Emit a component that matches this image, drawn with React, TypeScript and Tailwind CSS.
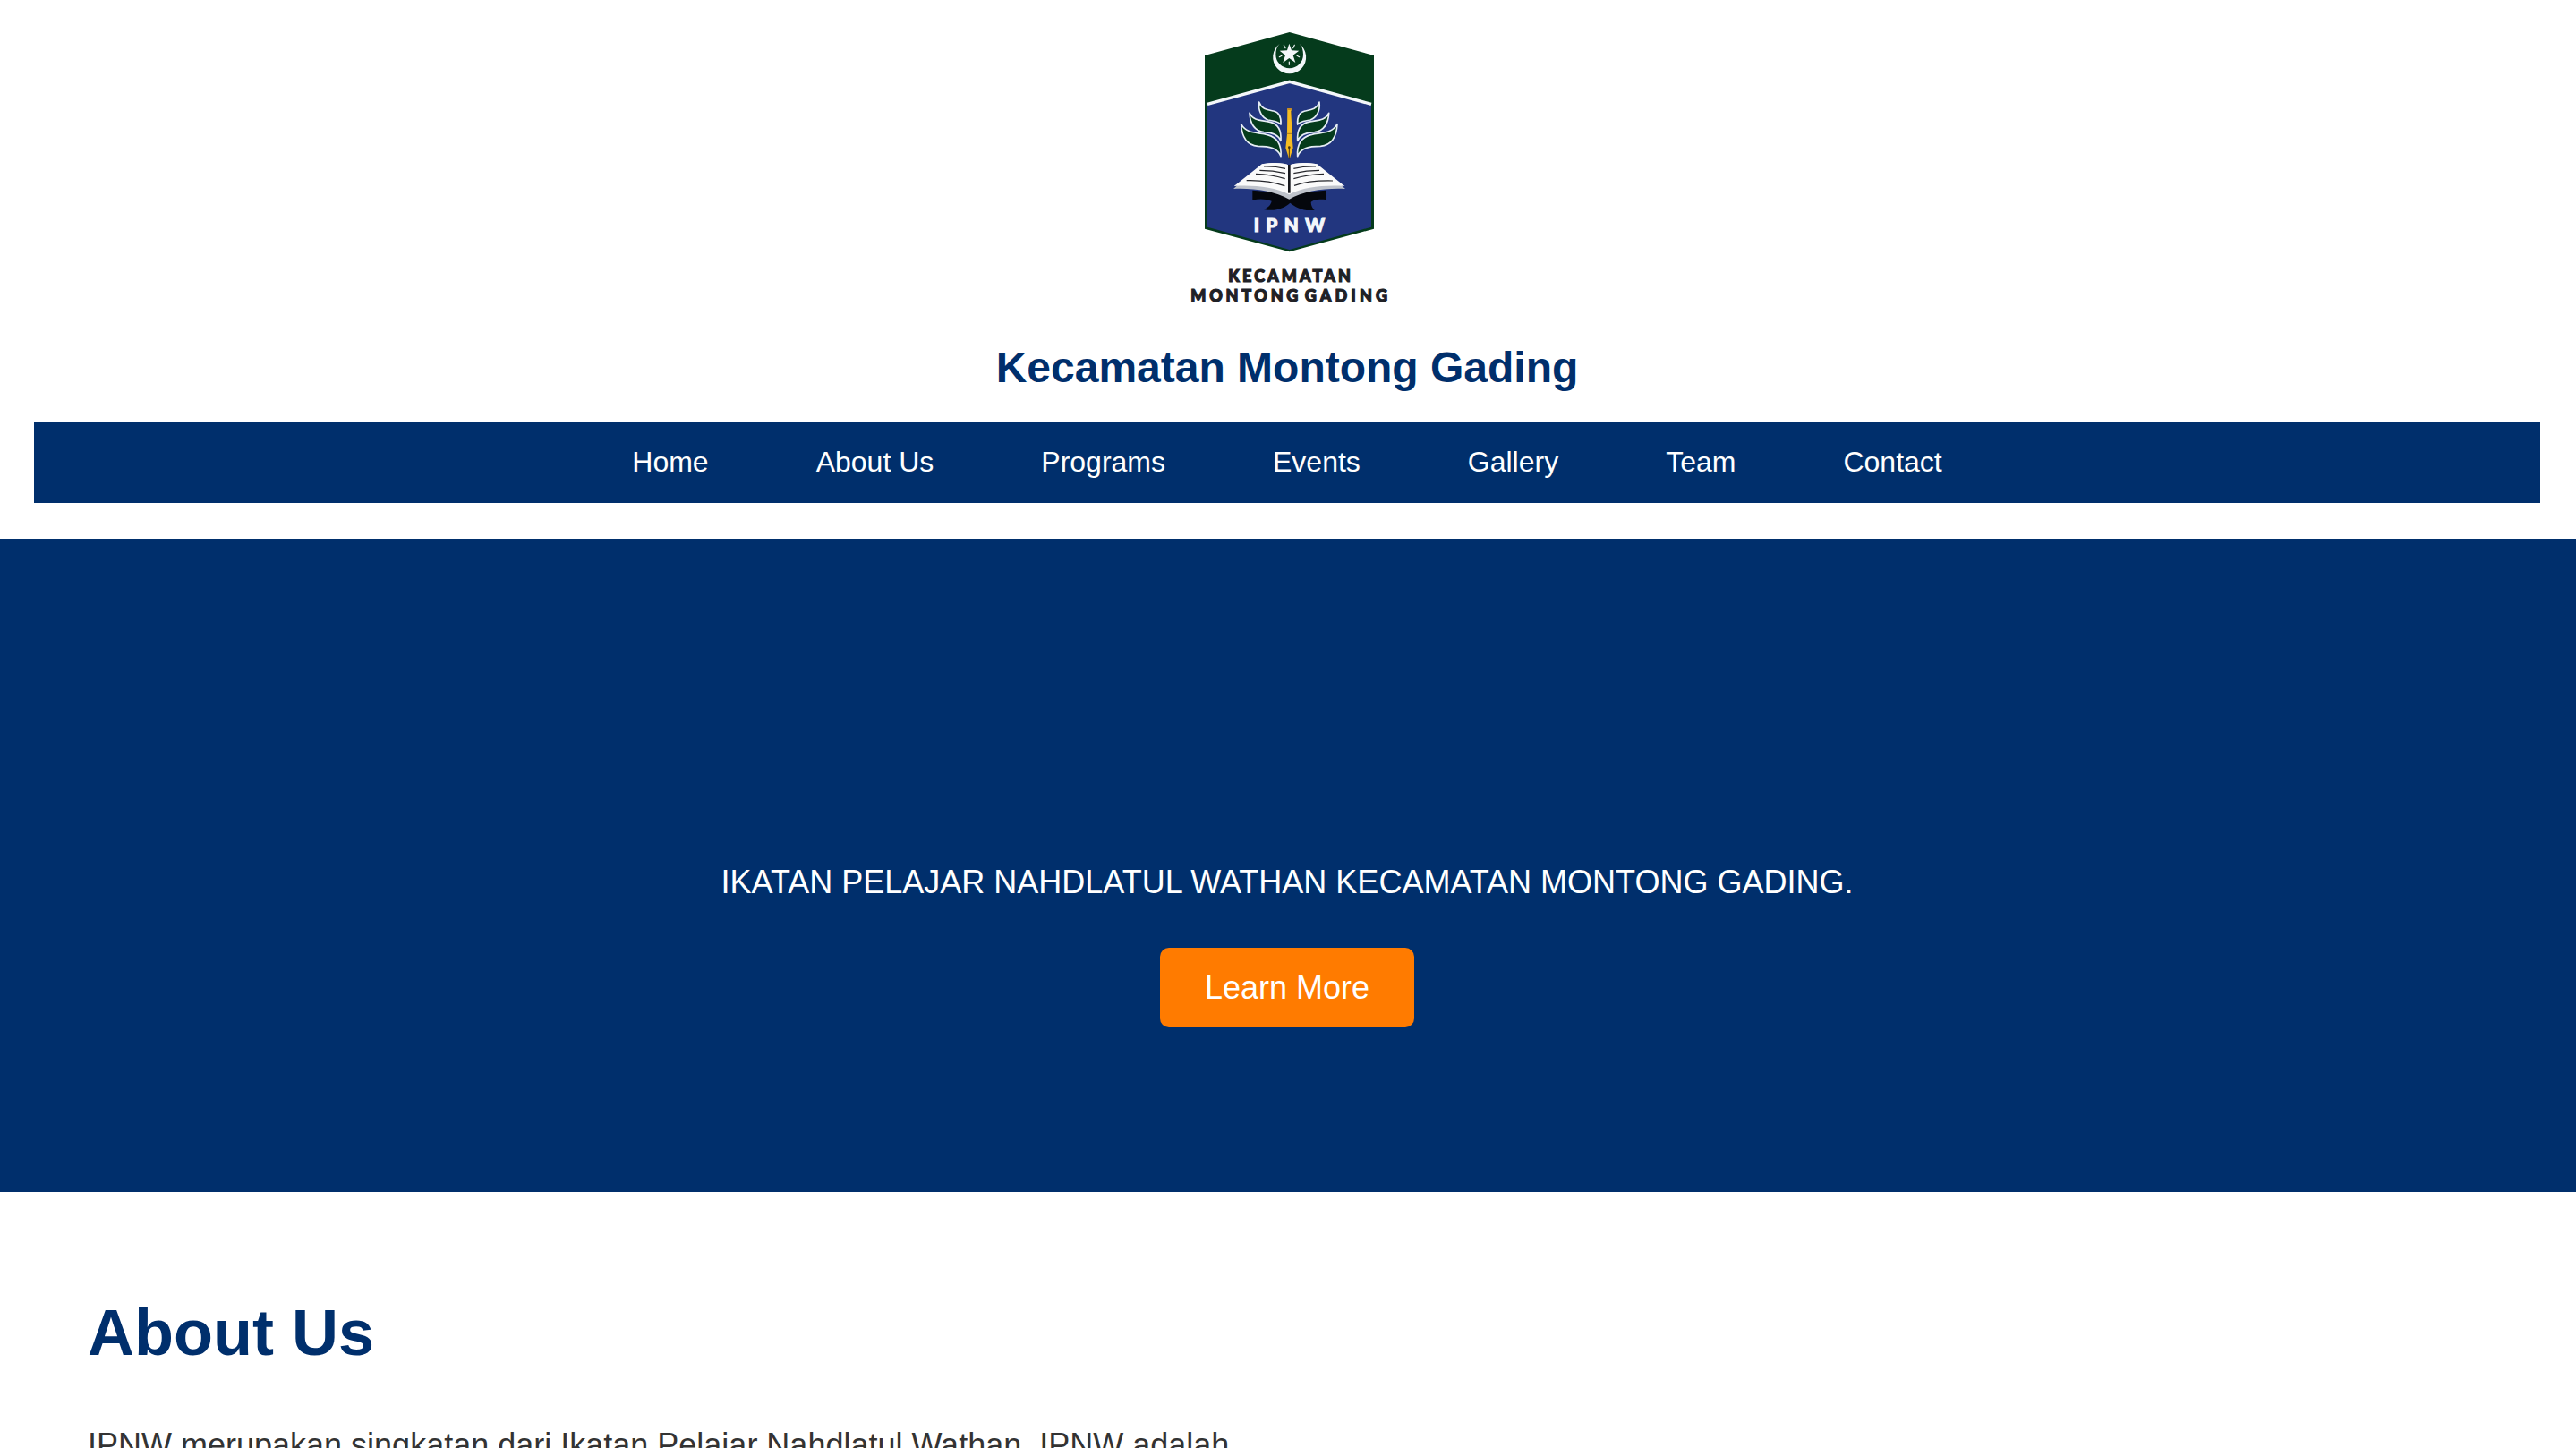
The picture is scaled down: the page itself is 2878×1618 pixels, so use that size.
const navItems = ['Home', 'About Us', 'Programs', 'Events', 'Gallery', 'Team', 'Contact'];

function Wing() {
  return (
    <g fill="#053b1c" stroke="#e6edf5" strokeWidth="5" strokeLinejoin="round">
      <path d="M290 282 C286 312 300 334 320 342 C340 346 356 346 363 357 C365 330 356 316 338 312 C318 308 298 306 290 282 Z" />
      <path d="M258 319 C260 356 276 378 306 383 C334 384 354 390 363 412 C365 376 352 356 330 350 C302 342 272 348 258 319 Z" />
      <path d="M230 356 C232 398 248 426 286 430 C326 430 352 436 363 464 C366 424 350 400 318 392 C288 382 250 392 230 356 Z" />
    </g>
  );
}

function Logo() {
  return (
    <svg viewBox="0 0 768 1020" className="h-[340px] w-[256px]" role="img" aria-label="IPNW">
      <path d="M392 48 L675 126 V707 L392 784 L108 707 V126 Z" fill="#053b1c" />
      <path d="M392 214 L666 289 V701 L392 777 L117 701 V289 Z" fill="#22367f" />
      <path d="M117 289 L392 214 L666 289" fill="none" stroke="#f4f7fa" strokeWidth="10" />

      <path d="M359 83 A55.5 55.5 0 1 0 425 83 C434 91 438 104 438 119 A46 46 0 0 1 346 119 C346 104 350 91 359 83 Z" transform="translate(0 4)" fill="#f4f7fa" />
      <path
        d="M391 86 L399 109 L424 110 L404 125 L412 150 L391 135 L370 150 L378 125 L359 110 L384 109 Z"
        fill="#f4f7fa"
      />
      <path
        d="M373 91 L378 101 M409 91 L404 101 M358 131 L366 127 M425 131 L417 127 M391 147 V157"
        stroke="#f4f7fa"
        strokeWidth="3.5"
        strokeLinecap="round"
      />

      <Wing />
      <g transform="translate(782 0) scale(-1 1)">
        <Wing />
      </g>

      <path d="M385 304 H398 V312 L400 390 L404 436 L393 470 H390 L379 436 L384 390 Z" fill="#f5bc22" />
      <path d="M385 303 H398 V309 H385 Z" fill="#c98d22" />
      <path d="M399 312 L402 386" stroke="#2a2d4e" strokeWidth="3" />
      <path d="M383 388 H401" stroke="#a97819" strokeWidth="3" />
      <path d="M391 434 V473" stroke="#4a3510" strokeWidth="3" />
      <circle cx="391" cy="434" r="4" fill="#4a3510" />

      <path
        d="M268 578 L340 584 L391 602 L445 584 L513 578 V609 C490 606 470 610 464 618 C464 630 470 640 476 644 C440 650 412 634 394 620 C374 638 344 650 306 642 C320 636 330 626 332 614 C310 606 290 606 268 611 Z"
        fill="#05070d"
      />
      <path d="M204 573 L300 490 C335 484 372 484 391 494 C410 484 450 484 484 490 L579 573 C510 570 440 580 391 608 C340 580 270 570 204 573 Z" fill="#bfc3cb" />
      <path d="M206 564 L300 490 C335 484 372 484 391 494 C410 484 450 484 484 490 L577 564 C510 560 440 566 391 592 C340 566 270 560 206 564 Z" fill="#fafafa" />
      <path d="M391 492 V587" stroke="#15161b" strokeWidth="8" />
      <path
        d="M306 498 Q344 497 378 505 M292 511 Q336 511 378 521 M279 523 Q330 524 377 539 M248 545 Q320 543 376 563 M406 505 Q440 497 480 498 M406 521 Q450 511 492 511 M406 539 Q456 524 507 523 M408 562 Q460 544 537 546"
        fill="none"
        stroke="#26272c"
        strokeWidth="3.5"
      />

      <g fontFamily="Lato, sans-serif" fontWeight="900" strokeWidth="3.5">
        <text x="272" y="717" fontSize="62" fill="#f4f7fa" stroke="#f4f7fa" textLength="238" lengthAdjust="spacing">
          IPNW
        </text>
        <g fill="#202126" stroke="#202126">
          <text x="187" y="886" fontSize="54" textLength="410" lengthAdjust="spacing">
            KECAMATAN
          </text>
          <text x="61" y="951" fontSize="54" textLength="360" lengthAdjust="spacing">
            MONTONG
          </text>
          <text x="443" y="951" fontSize="54" textLength="277" lengthAdjust="spacing">
            GADING
          </text>
        </g>
      </g>
    </svg>
  );
}

export default function App() {
  return (
    <div className="h-[1618px] w-full overflow-hidden bg-white font-['Liberation_Sans',Arial,sans-serif] text-[#333333]">
      <header className="flex flex-col items-center pt-5 pr-10 pb-10 pl-[38px]">
        <Logo />
        <h1 className="mt-[21px] text-5xl leading-[60px] font-bold text-[#002f6c]">Kecamatan Montong Gading</h1>
        <nav className="mt-[30px] h-[91px] w-full bg-[#002f6c]">
          <ul className="flex h-full items-center justify-center gap-[120px] pb-0.5 text-[32px] text-white">
            {navItems.map((item) => (
              <li key={item}>
                <a href="#">{item}</a>
              </li>
            ))}
          </ul>
        </nav>
      </header>

      <section className="flex h-[730px] flex-col items-center bg-[#002f6c] pt-[357px] pr-0.5 text-4xl text-white">
        <p className="leading-[54px]">IKATAN PELAJAR NAHDLATUL WATHAN KECAMATAN MONTONG GADING.</p>
        <a href="#" className="mt-[46px] flex h-[89px] items-center rounded-[10px] bg-[#ff7b00] px-[50px]">
          Learn More
        </a>
      </section>

      <section className="px-[98px] pt-[117px]">
        <h2 className="text-7xl leading-[80px] font-bold text-[#002f6c]">About Us</h2>
        <p className="mt-[57px] text-4xl leading-[58px] whitespace-nowrap">
          IPNW merupakan singkatan dari Ikatan Pelajar Nahdlatul Wathan. IPNW adalah
        </p>
      </section>
    </div>
  );
}
